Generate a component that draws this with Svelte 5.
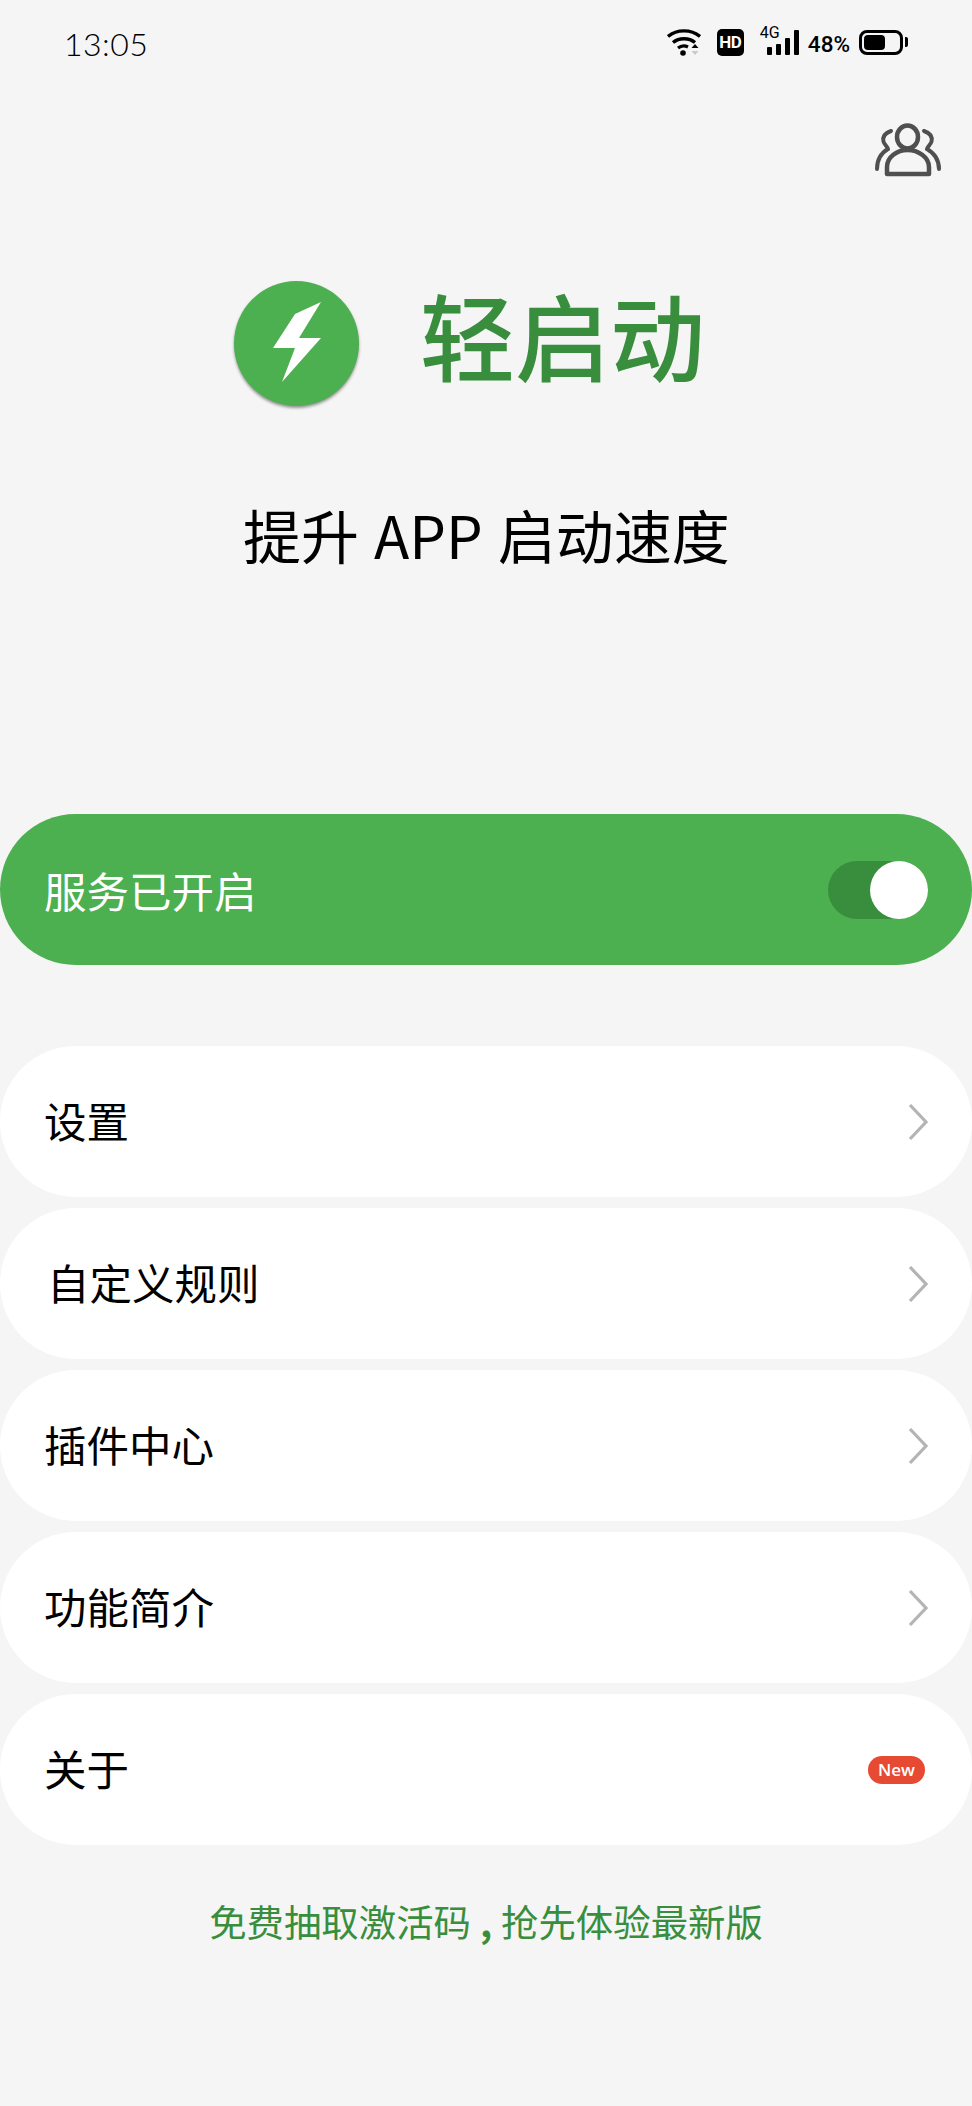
<script>
  let enabled = $state(true);

  const menu = [
    { label: "设置", indent: false },
    { label: "自定义规则", indent: true },
    { label: "插件中心", indent: false },
    { label: "功能简介", indent: false },
    { label: "关于", indent: false, badge: "New" },
  ];
</script>

<div class="page">
  <header class="status">
    <span class="time">13:05</span>
    <div class="status-icons">
      <svg class="wifi" viewBox="0 0 34 28" aria-hidden="true">
        <path d="M1 8.500C10 1 24 1 33 8.500" fill="none" stroke="#000" stroke-width="3.4" />
        <path d="M6 14.500C12 9.500 22 9.500 28 14.500" fill="none" stroke="#000" stroke-width="3.4" />
        <path d="M11 20C14 17.600 18 17.400 21 19" fill="none" stroke="#000" stroke-width="3.2" />
        <circle cx="16" cy="25" r="2.800" fill="#000" />
        <path d="M28 16l3.500 4h-7z" fill="#000" />
        <path d="M28 27l-3.500-4h7z" fill="#c9c9c9" />
      </svg>
      <span class="hd">HD</span>
      <div class="signal">
        <span class="net">4G</span>
        <i class="bar b1"></i>
        <i class="bar b2"></i>
        <i class="bar b3"></i>
        <i class="bar b4"></i>
      </div>
      <span class="pct">48%</span>
      <div class="battery">
        <div class="cell"><div class="level"></div></div>
        <i class="cap"></i>
      </div>
    </div>
  </header>

  <div class="top">
    <button class="users" aria-label="用户">
      <svg viewBox="0 0 85 70" aria-hidden="true">
        <ellipse cx="41.500" cy="22" rx="10.500" ry="11.500" fill="none" stroke="#4f4f4f" stroke-width="4.500" />
        <path d="M21 59V52C21 42 31 35 41.500 35S63 42 63 52V59Z" fill="none" stroke="#4f4f4f" stroke-width="4.500" stroke-linejoin="round" />
        <path d="M25 16C19 18 16.500 22 17.500 26.500C18.500 30 22 32 22 34C15 38 11 45 11 54" fill="none" stroke="#4f4f4f" stroke-width="4" stroke-linecap="round" />
        <path d="M58 16C64 18 66.500 22 65.500 26.500C64.500 30 61 32 61 34C68 38 73 45 73 54" fill="none" stroke="#4f4f4f" stroke-width="4" stroke-linecap="round" />
      </svg>
    </button>
  </div>

  <section class="brand">
    <div class="logo">
      <svg viewBox="0 0 125 125" aria-hidden="true">
        <path d="M87 21L61 33 39 67 61 67 48 101 87 57 65 57Z" fill="#fff" />
      </svg>
    </div>
    <h1>轻启动</h1>
  </section>

  <p class="tagline">提升 APP 启动速度</p>

  <button class="row service" onclick={() => (enabled = !enabled)}>
    <span>服务已开启</span>
    <span class="toggle" class:off={!enabled}><i></i></span>
  </button>

  <nav class="menu">
    {#each menu as item}
      <button class="row">
        <span class="label" class:indent={item.indent}>{item.label}</span>
        {#if item.badge}
          <span class="badge">{item.badge}</span>
        {:else}
          <svg class="chevron" viewBox="0 0 20 38" aria-hidden="true">
            <path d="M2 2L18 19 2 36" fill="none" stroke="#b4b4b4" stroke-width="3.200" />
          </svg>
        {/if}
      </button>
    {/each}
  </nav>

  <p class="promo">免费抽取激活码<span class="comma">,</span>抢先体验最新版</p>
</div>

<style>
  :global(body) {
    background: #f5f5f5;
  }
  .page {
    min-height: 2106px;
    background: #f5f5f5;
    font-family: "Noto Sans CJK SC", "Noto Sans", sans-serif;
    color: #000;
    overflow: hidden;
  }
  .status {
    display: flex;
    align-items: flex-start;
    justify-content: space-between;
    height: 60px;
    padding: 28px 64px 0 64px;
    box-sizing: border-box;
  }
  .time {
    font-family: Lato, "Noto Sans", sans-serif;
    font-size: 32px;
    font-weight: 300;
    line-height: 32px;
    letter-spacing: 0.5px;
    color: #000;
  }
  .status-icons {
    display: flex;
    align-items: center;
    height: 28px;
  }
  .wifi {
    width: 34px;
    height: 28px;
  }
  .hd {
    width: 27px;
    height: 27px;
    margin-left: 16px;
    background: #000;
    border-radius: 5px;
    color: #fff;
    font-family: Roboto, sans-serif;
    font-weight: 700;
    font-size: 17px;
    line-height: 27px;
    letter-spacing: -0.5px;
    text-align: center;
  }
  .signal {
    display: flex;
    align-items: flex-end;
    gap: 4px;
    height: 26px;
    margin-left: 16px;
    padding-left: 7px;
    position: relative;
  }
  .net {
    position: absolute;
    left: 0;
    top: -3px;
    font-family: Roboto, sans-serif;
    font-size: 16px;
    line-height: 14px;
    font-weight: 400;
  }
  .bar {
    display: block;
    width: 5px;
    background: #000;
    border-radius: 1px;
  }
  .b1 { height: 8px; }
  .b2 { height: 11px; }
  .b3 { height: 17px; }
  .b4 { height: 25px; }
  .pct {
    margin-left: 9px;
    font-family: Roboto, sans-serif;
    font-size: 22.5px;
    font-weight: 500;
    line-height: 28px;
    position: relative;
    top: 2px;
  }
  .battery {
    display: flex;
    align-items: center;
    margin-left: 9px;
  }
  .cell {
    width: 44px;
    height: 25px;
    box-sizing: border-box;
    border: 3px solid #000;
    border-radius: 8px;
    padding: 2px;
  }
  .level {
    width: 21px;
    height: 100%;
    background: #000;
    border-radius: 4px;
  }
  .cap {
    width: 3px;
    height: 10px;
    margin-left: 2px;
    background: #000;
    border-radius: 0 2px 2px 0;
  }
  .top {
    display: flex;
    justify-content: flex-end;
    height: 70px;
    margin-top: 55px;
    padding-right: 21px;
  }
  .users {
    width: 85px;
    height: 70px;
    margin-top: 0;
    padding: 0;
    border: none;
    background: transparent;
  }
  .users svg {
    display: block;
    width: 85px;
    height: 70px;
  }
  .brand {
    display: flex;
    align-items: center;
    height: 125px;
    margin-top: 96px;
    padding-left: 234px;
  }
  .logo {
    flex: none;
    width: 125px;
    height: 125px;
    border-radius: 50%;
    background: #4caf50;
    box-shadow: 0 2px 3px rgba(0, 0, 0, 0.4);
  }
  .logo svg {
    display: block;
  }
  h1 {
    margin: 0 0 20px 61px;
    color: #388e3c;
    font-size: 95px;
    line-height: 124px;
    font-weight: 500;
    letter-spacing: 0;
  }
  .tagline {
    margin: 88px 0 0 243px;
    height: 80px;
    font-size: 58px;
    line-height: 80px;
    word-spacing: 2px;
    white-space: nowrap;
  }
  .row {
    display: flex;
    align-items: center;
    justify-content: space-between;
    width: 100%;
    height: 151px;
    padding: 0 44px 0 44px;
    box-sizing: border-box;
    border: none;
    border-radius: 76px;
    background: #fff;
    color: #000;
    font: inherit;
    font-size: 42.5px;
    text-align: left;
  }
  .label {
    position: relative;
    top: -2px;
  }
  .indent {
    padding-left: 3px;
  }
  .service {
    margin-top: 240px;
    background: #4caf50;
    color: #fff;
  }
  .toggle {
    display: block;
    position: relative;
    width: 100px;
    height: 58px;
    border-radius: 29px;
    background: #388e3c;
  }
  .toggle i {
    position: absolute;
    right: 0;
    top: 0;
    width: 58px;
    height: 58px;
    border-radius: 50%;
    background: #fff;
  }
  .toggle.off {
    background: #bbb;
  }
  .toggle.off i {
    right: auto;
    left: 0;
  }
  .menu {
    display: flex;
    flex-direction: column;
    gap: 11px;
    margin-top: 81px;
  }
  .chevron {
    width: 20px;
    height: 38px;
  }
  .badge {
    display: block;
    width: 57px;
    height: 28px;
    margin-right: 3px;
    border-radius: 14px;
    background: #e64a32;
    color: #fff;
    font-family: "Open Sans", sans-serif;
    font-size: 17px;
    font-weight: 600;
    line-height: 28px;
    text-align: center;
  }
  .promo {
    margin: 49px 0 0;
    color: #388e3c;
    font-size: 37.4px;
    line-height: 54px;
    letter-spacing: 0;
    text-align: center;
  }
  .comma {
    padding: 0 9px;
    font-weight: 700;
  }
</style>
